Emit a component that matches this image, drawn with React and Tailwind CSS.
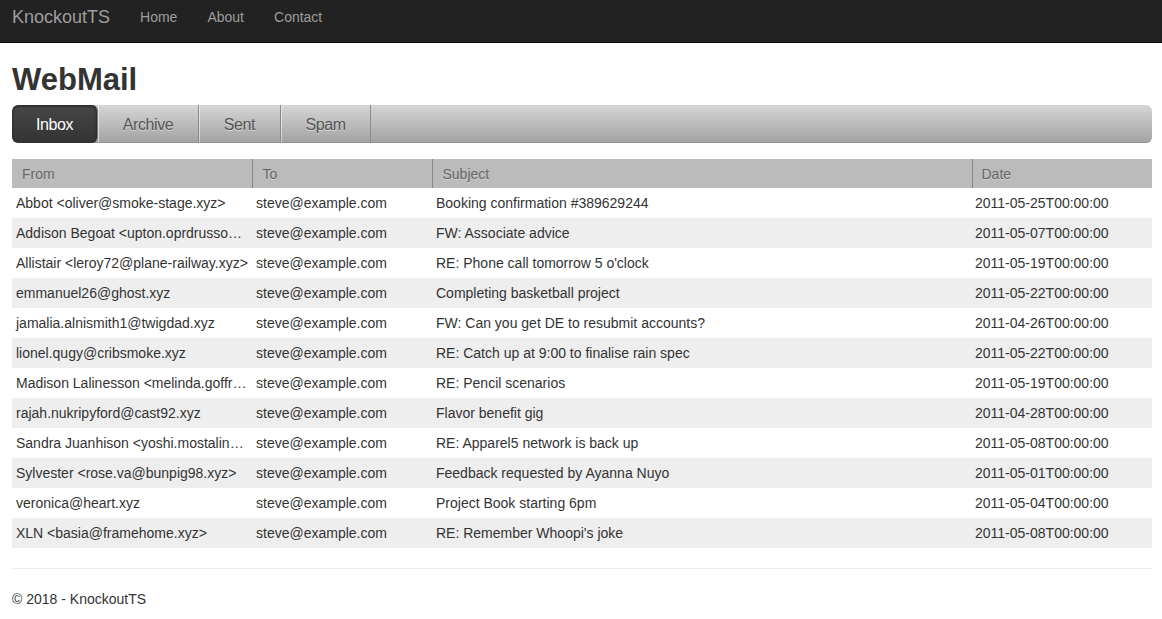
import React from 'react';

const emails = [
    ['Abbot <oliver@smoke-stage.xyz>', 'Booking confirmation #389629244', '2011-05-25T00:00:00'],
    ['Addison Begoat <upton.oprdrusson@gmail-bus.xyz>', 'FW: Associate advice', '2011-05-07T00:00:00'],
    ['Allistair <leroy72@plane-railway.xyz>', "RE: Phone call tomorrow 5 o'clock", '2011-05-19T00:00:00'],
    ['emmanuel26@ghost.xyz', 'Completing basketball project', '2011-05-22T00:00:00'],
    ['jamalia.alnismith1@twigdad.xyz', 'FW: Can you get DE to resubmit accounts?', '2011-04-26T00:00:00'],
    ['lionel.qugy@cribsmoke.xyz', 'RE: Catch up at 9:00 to finalise rain spec', '2011-05-22T00:00:00'],
    ['Madison Lalinesson <melinda.goffrey@kite.xyz>', 'RE: Pencil scenarios', '2011-05-19T00:00:00'],
    ['rajah.nukripyford@cast92.xyz', 'Flavor benefit gig', '2011-04-28T00:00:00'],
    ['Sandra Juanhison <yoshi.mostalinski@car.xyz>', 'RE: Apparel5 network is back up', '2011-05-08T00:00:00'],
    ['Sylvester <rose.va@bunpig98.xyz>', 'Feedback requested by Ayanna Nuyo', '2011-05-01T00:00:00'],
    ['veronica@heart.xyz', 'Project Book starting 6pm', '2011-05-04T00:00:00'],
    ['XLN <basia@framehome.xyz>', "RE: Remember Whoopi's joke", '2011-05-08T00:00:00'],
];

const folders = [
    { name: 'Inbox', w: 'w-[86px]' },
    { name: 'Archive', w: 'w-[101px]' },
    { name: 'Sent', w: 'w-[82px]' },
    { name: 'Spam', w: 'w-[90px]' },
];

export default function App() {
    return (
        <div className="min-h-[619px] bg-white font-['Liberation_Sans',Arial,sans-serif] text-[14px] text-[#333]">
            {/* navbar */}
            <div className="h-[43px] bg-[#222] border-b border-[#080808] flex items-center px-3">
                <span className="text-[18px] text-[#9d9d9d] mr-[15px] -mt-[8px]">KnockoutTS</span>
                {['Home', 'About', 'Contact'].map((l) => (
                    <span key={l} className="px-[15px] text-[#9d9d9d] -mt-[8px]">{l}</span>
                ))}
            </div>

            <div className="pl-3 pr-[10px]">
                <h1 className="text-[31px] font-bold leading-none mt-[21px] mb-[10px] text-[#333]">WebMail</h1>

                {/* folder tabs */}
                <div className="h-[38px] rounded-[6px] bg-gradient-to-b from-[#d6d6d6] to-[#a2a2a2] flex overflow-hidden shadow-[inset_0_-1px_0_rgba(0,0,0,0.1)]">
                    {folders.map((f, i) => (
                        <div
                            key={f.name}
                            className={
                                i === 0
                                    ? `${f.w} flex items-center justify-center pt-[2px] rounded-[6px] bg-gradient-to-b from-[#474747] to-[#333] text-white text-[16px] tracking-[-0.4px] shadow-[inset_0_1px_3px_rgba(0,0,0,0.6)] border-r border-[#777]`
                                    : `${f.w} flex items-center justify-center pt-[2px] text-[#555] text-[16px] tracking-[-0.4px] border-r border-[#8a8a8a] shadow-[inset_1px_0_0_rgba(255,255,255,0.5)] [text-shadow:0_1px_0_rgba(255,255,255,0.5)]`
                            }
                        >
                            {f.name}
                        </div>
                    ))}
                </div>

                {/* message grid */}
                <table className="w-full table-fixed border-collapse mt-[16px]">
                    <colgroup>
                        <col className="w-[240px]" />
                        <col className="w-[180px]" />
                        <col className="w-[540px]" />
                        <col />
                    </colgroup>
                    <thead>
                        <tr className="h-[29px] bg-[#bbb] text-[#666] text-left">
                            <th className="font-normal pl-[10px] pt-[2px] [text-shadow:0_1px_0_rgba(255,255,255,0.3)]">From</th>
                            <th className="font-normal pl-[10px] pt-[2px] border-l border-[#888] [text-shadow:0_1px_0_rgba(255,255,255,0.3)]">To</th>
                            <th className="font-normal pl-[10px] pt-[2px] border-l border-[#888] [text-shadow:0_1px_0_rgba(255,255,255,0.3)]">Subject</th>
                            <th className="font-normal pl-[9px] pt-[2px] border-l border-[#888] [text-shadow:0_1px_0_rgba(255,255,255,0.3)]">Date</th>
                        </tr>
                    </thead>
                    <tbody>
                        {emails.map((m, idx) => (
                            <tr key={idx} className={`h-[30px] ${idx % 2 === 1 ? 'bg-[#eee]' : 'bg-white'}`}>
                                <td className="pl-[4px] pr-[4px] truncate">{m[0]}</td>
                                <td className="pl-[4px] truncate">steve@example.com</td>
                                <td className="pl-[4px] truncate">{m[1]}</td>
                                <td className="pl-[3px] truncate">{m[2]}</td>
                            </tr>
                        ))}
                    </tbody>
                </table>

                <hr className="mt-[20px] mb-[20px] border-t border-[#eee]" />
                <footer>
                    <p className="text-[14px] mt-[1px]">© 2018 - KnockoutTS</p>
                </footer>
            </div>
        </div>
    );
}
